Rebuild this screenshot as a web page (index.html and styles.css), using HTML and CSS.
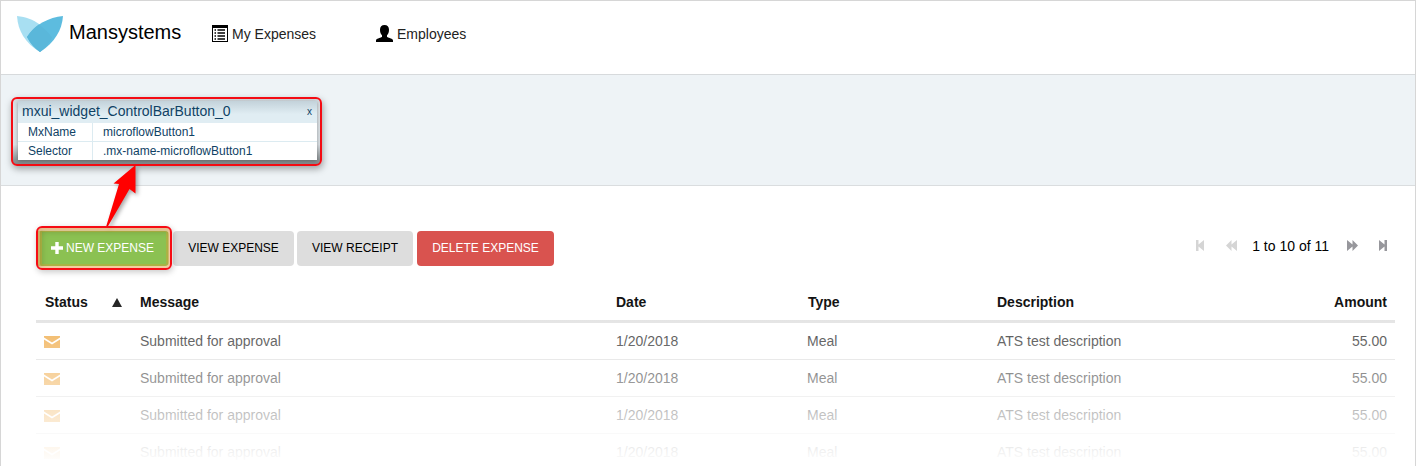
FILE: index.html
```html
<!DOCTYPE html>
<html lang="en">
<head>
<meta charset="utf-8">
<title>Mansystems</title>
<link rel="stylesheet" href="styles.css">
</head>
<body>
<div class="page">
  <header class="topbar">
    <svg class="logo" width="46" height="36" viewBox="0 0 46 36">
      <path d="M0 0C9 1 16 3.500 22 8L30 16L23 36C8 27 1 15 0 0Z" fill="#a8dff2"/>
      <path d="M46 0C32 1.500 18 8 10 21C13 27 18 32 23 36C38 26 45 14 46 0Z" fill="#5dbcdf"/>
      <path d="M22 8.500C27 12 32 17 35 21.500Q31 30 23 36Q15 31 10 21Q15 13 22 8.500Z" fill="#5ab7da"/>
    </svg>
    <span class="brand">Mansystems</span>
    <nav class="nav">
      <a class="nav-item expenses">
        <svg width="16" height="17" viewBox="0 0 16 17">
          <path d="M0 0H16V17H0Z"/><path d="M1 3H15V16H1Z" fill="#fff"/>
          <path d="M2.500 5h1.500M2.500 8h1.500M2.500 11h1.500M2.500 14h1.500M5.500 5H13M5.500 8H13M5.500 11H13M5.500 14H13" stroke="#000" stroke-width="1.700"/>
        </svg>
        <span>My Expenses</span>
      </a>
      <a class="nav-item employees">
        <svg width="17" height="17" viewBox="0 0 17 17">
          <path d="M8.500 0C5.600 0 4 2 4 4.700C4 7.300 4.700 9 6 10.200V12C4 13 0 13.700 0 15.500V17H17V15.500C17 13.700 13 13 11 12V10.200C12.300 9 13 7.300 13 4.700C13 2 11.400 0 8.500 0Z"/>
        </svg>
        <span>Employees</span>
      </a>
    </nav>
  </header>

  <section class="band">
    <div class="callout">
      <div class="inspector">
        <div class="inspector-title"><span>mxui_widget_ControlBarButton_0</span><span class="close">x</span></div>
        <div class="inspector-row"><span class="key">MxName</span><span class="value">microflowButton1</span></div>
        <div class="inspector-row"><span class="key">Selector</span><span class="value">.mx-name-microflowButton1</span></div>
      </div>
    </div>
  </section>

  <main class="content">
    <div class="toolbar">
      <button class="btn new">
        <svg width="12" height="12" viewBox="0 0 12 12"><path d="M4.300 0H7.700V4.300H12V7.700H7.700V12H4.300V7.700H0V4.300H4.300Z" fill="#fff"/></svg>
        <span>NEW EXPENSE</span>
      </button>
      <button class="btn view">VIEW EXPENSE</button>
      <button class="btn receipt">VIEW RECEIPT</button>
      <button class="btn delete">DELETE EXPENSE</button>
      <div class="pager">
        <svg class="first off" width="8" height="11" viewBox="0 0 8 11"><path d="M0 0H2.500V4.500L8 0V11L2.500 6.500V11H0Z"/></svg>
        <svg class="prev off" width="11" height="11" viewBox="0 0 11 11"><path d="M5.500 0V4.500L11 0V11L5.500 6.500V11L0 5.500Z"/></svg>
        <span class="count">1 to 10 of 11</span>
        <svg class="next" width="11" height="11" viewBox="0 0 11 11"><path d="M0 0L5.500 4.500V0L11 5.500L5.500 11V6.500L0 11Z"/></svg>
        <svg class="last" width="8" height="11" viewBox="0 0 8 11"><path d="M0 0L5.500 4.500V0H8V11H5.500V6.500L0 11Z"/></svg>
      </div>
    </div>

    <div class="grid">
      <div class="row head">
        <span class="status">Status <svg width="10" height="9" viewBox="0 0 10 9"><path d="M5 0L10 9H0Z" fill="#222"/></svg></span>
        <span>Message</span><span>Date</span><span class="type">Type</span><span>Description</span><span class="amount">Amount</span>
      </div>
      <div class="row">
        <span><svg class="mail" width="16" height="12" viewBox="0 0 16 12"><path d="M0 0H16V1.500L8 6.500L0 1.500ZM0 3.500L8 8.500L16 3.500V12H0Z"/></svg></span>
        <span>Submitted for approval</span><span>1/20/2018</span><span>Meal</span><span>ATS test description</span><span class="amount">55.00</span>
      </div>
      <div class="row">
        <span><svg class="mail" width="16" height="12" viewBox="0 0 16 12"><path d="M0 0H16V1.500L8 6.500L0 1.500ZM0 3.500L8 8.500L16 3.500V12H0Z"/></svg></span>
        <span>Submitted for approval</span><span>1/20/2018</span><span>Meal</span><span>ATS test description</span><span class="amount">55.00</span>
      </div>
      <div class="row">
        <span><svg class="mail" width="16" height="12" viewBox="0 0 16 12"><path d="M0 0H16V1.500L8 6.500L0 1.500ZM0 3.500L8 8.500L16 3.500V12H0Z"/></svg></span>
        <span>Submitted for approval</span><span>1/20/2018</span><span>Meal</span><span>ATS test description</span><span class="amount">55.00</span>
      </div>
      <div class="row">
        <span><svg class="mail" width="16" height="12" viewBox="0 0 16 12"><path d="M0 0H16V1.500L8 6.500L0 1.500ZM0 3.500L8 8.500L16 3.500V12H0Z"/></svg></span>
        <span>Submitted for approval</span><span>1/20/2018</span><span>Meal</span><span>ATS test description</span><span class="amount">55.00</span>
      </div>
    </div>
  </main>

  <svg class="arrow" width="36" height="64" viewBox="0 0 36 64"><path d="M30.500 0L8.500 18.500L14 19L1 62L2.500 62L24.500 24L30.500 28.500Z" fill="#f00"/></svg>
  <div class="highlight"></div>
  <div class="fade"></div>
</div>
</body>
</html>
```

FILE: styles.css
```css
* { box-sizing: border-box; }
body {
  margin: 0;
  background: #fff;
  color: #333;
  font: 14px/20px "Liberation Sans", Arial, sans-serif;
}
svg { display: block; flex: none; }
.page {
  position: relative;
  width: 1416px;
  height: 466px;
  overflow: hidden;
  border: 1px solid #d6d6d6;
  border-bottom: 0;
}
.topbar {
  display: flex;
  height: 74px;
  padding: 15px 0 0 16px;
  border-bottom: 1px solid #d7dadc;
}
.brand { margin: 4px 0 0 6px; width: 143px; font-size: 20px; line-height: 24px; color: #000; }
.nav { display: flex; padding-top: 9px; }
.nav-item { display: flex; gap: 4px; height: 20px; line-height: 19px; color: #222; }
.nav-item.expenses { width: 164px; }
.band {
  height: 111px;
  padding: 22px 0 0 10px;
  background: #eef3f6;
  border-bottom: 1px solid #dadddf;
}
.callout {
  width: 311px;
  height: 69px;
  padding: 2px 3px 3px 5px;
  border: 2px solid #f60c14;
  border-radius: 6px;
  background: linear-gradient(#d3dbe0 0, #dfe5e9 15%, #dce2e6 70%, #8d9496 94%, #858b8d);
  box-shadow: 1px 3px 7px rgba(0, 0, 0, .35);
}
.inspector { width: 299px; color: #0f4265; font-size: 12px; box-shadow: 0 1px 4px rgba(0, 0, 0, .35); }
.inspector-title {
  display: flex;
  justify-content: space-between;
  height: 22px;
  padding: 0 5px 0 4px;
  line-height: 21px;
  font-size: 14px;
  background: linear-gradient(#c3d2da, #e0edf3 60%);
}
.close { font-size: 10px; }
.inspector-row { display: flex; height: 19px; line-height: 18px; background: #fff; border-bottom: 1px solid #dcebf1; }
.inspector-row:last-child { height: 18px; border-bottom: 0; }
.key { width: 75px; padding-left: 10px; border-right: 1px solid #dcebf1; }
.value { padding-left: 10px; }
.content { padding: 45px 20px 0 35px; }
.toolbar { display: flex; height: 35px; }
.btn {
  display: flex;
  align-items: center;
  justify-content: center;
  height: 35px;
  padding: 0 0 2px;
  border: 0;
  border-radius: 4px;
  background: #ddd;
  color: #000;
  font: 12px/16px "Liberation Sans", Arial, sans-serif;
}
.btn.new { width: 133px; gap: 3px; background: #8bc152; color: #fff; }
.btn.view { width: 121px; margin-left: 4px; }
.btn.receipt { width: 116px; margin-left: 3px; }
.btn.delete { width: 137px; margin-left: 4px; background: #d9534f; color: #fff; }
.pager { display: flex; align-items: center; margin: 0 8px 7px auto; color: #000; fill: #97979c; }
.off { fill: #d5d5d5; }
.prev { margin-left: 22px; }
.count { margin: 2px 18px 0 15px; }
.next { margin-right: 21px; }
.grid { margin-top: 19px; }
.row {
  display: grid;
  grid-template-columns: 104px 476px 191px 190px 1fr 90px;
  height: 37px;
  padding: 8px 8px 0 0;
  border-bottom: 1px solid #ddd;
}
.row.head { height: 38px; padding-top: 7px; font-weight: bold; color: #111; border-bottom: 3px solid #e1e1e1; }
.status { display: flex; align-items: center; justify-content: space-between; height: 20px; padding: 0 18px 0 9px; }
.type { padding-left: 1px; }
.amount { text-align: right; }
.mail { margin: 5px 0 0 8px; fill: #f0ad4e; }
.highlight {
  position: absolute;
  left: 35px;
  top: 225px;
  width: 136px;
  height: 44px;
  border: 2px solid #f60c14;
  border-radius: 6px;
  box-shadow: 1px 2px 6px rgba(0, 0, 0, .22), inset 0 0 0 2px rgba(255, 190, 150, .45), inset 0 0 0 4px rgba(215, 160, 50, .4), inset 3px 3px 6px rgba(80, 80, 20, .35);
}
.arrow { position: absolute; left: 104px; top: 164px; filter: drop-shadow(2px 2px 2px rgba(0, 0, 0, .35)); }
.fade {
  position: absolute;
  left: -1px;
  right: -1px;
  top: 300px;
  bottom: 0;
  background: linear-gradient(rgba(255, 255, 255, 0), #fff 98%);
}
```
